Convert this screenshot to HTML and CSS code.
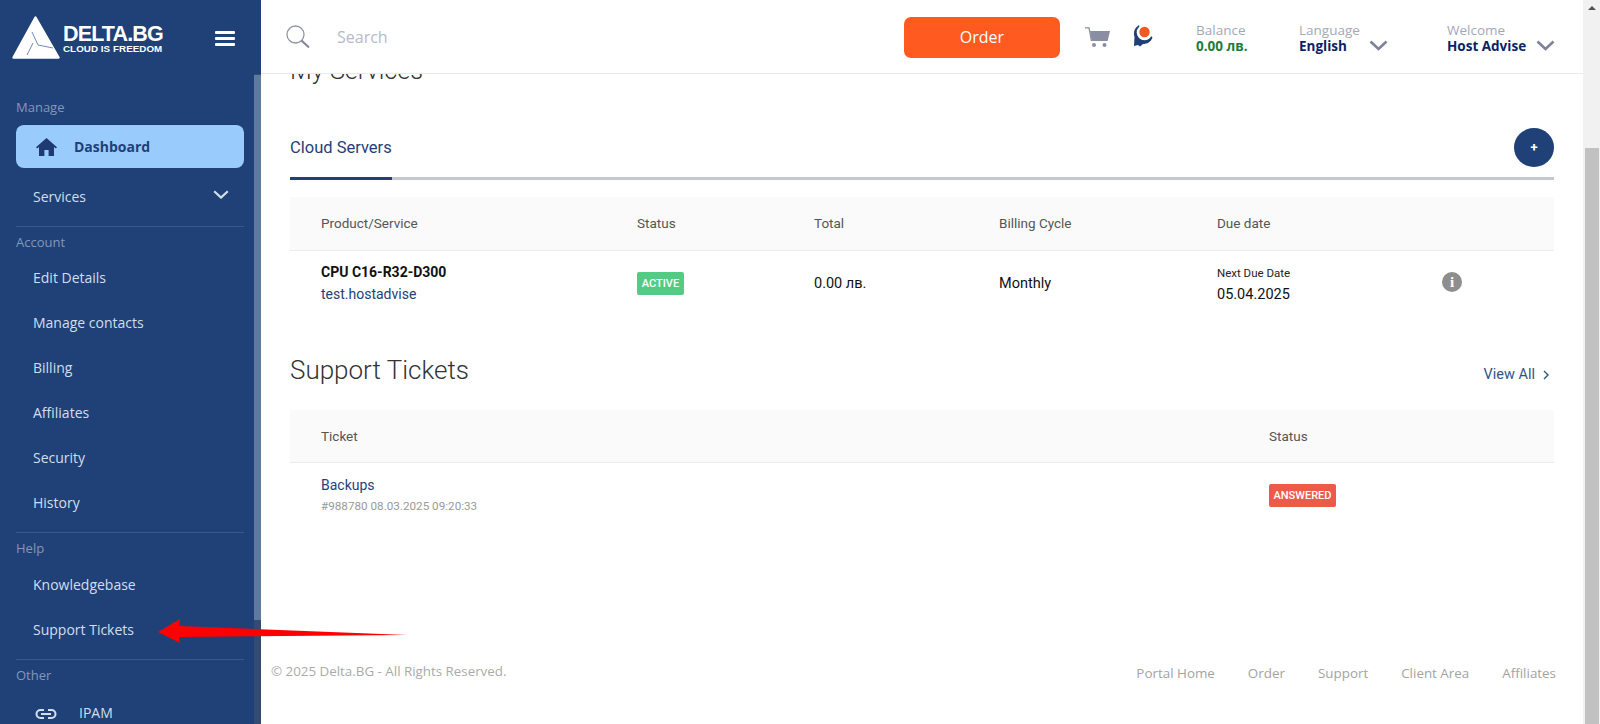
FILE: index.html
```html
<!DOCTYPE html>
<html lang="en">
<head>
<meta charset="utf-8">
<title>Delta.BG - Dashboard</title>
<link rel="stylesheet" href="styles.css">
</head>
<body>
<div class="app">
  <aside class="sidebar">
    <div class="brand">
      <svg class="logo-mark" viewBox="0 0 48 43" aria-hidden="true">
        <path d="M23.5 1.5 46.5 41.5H1.500Z" fill="#fff" stroke="#fff" stroke-width="2.4" stroke-linejoin="round"/>
        <path d="M20 16 26 29M21 27 15 39M26 29 41 32" fill="none" stroke="#6f8bb5" stroke-width="1"/>
      </svg>
      <div class="brand-text">
        <div class="brand-name">DELTA.BG</div>
        <div class="brand-tag">CLOUD IS FREEDOM</div>
      </div>
      <div class="burger"><span></span><span></span><span></span></div>
    </div>
    <div class="side-body">
      <nav class="nav">
        <div class="group first">
          <div class="label">Manage</div>
          <a class="active-item">
            <svg class="home" viewBox="0 0 21 18" aria-hidden="true"><path d="M10.5 0 21 9.2 19.8 10.4 18 8.9V18H12.6V12H8.4V18H3V8.9L1.2 10.4 0 9.2Z" fill="#1f3a70"/></svg>
            <span>Dashboard</span>
          </a>
          <a class="item item-row">Services
            <svg class="side-chev" viewBox="0 0 16 9" aria-hidden="true"><path d="M1.2 1.2 8 7.6 14.8 1.2" fill="none" stroke="#d3deec" stroke-width="2.2"/></svg>
          </a>
        </div>
        <div class="group acct">
          <div class="label">Account</div>
          <a class="item">Edit Details</a>
          <a class="item">Manage contacts</a>
          <a class="item">Billing</a>
          <a class="item">Affiliates</a>
          <a class="item">Security</a>
          <a class="item">History</a>
        </div>
        <div class="group help">
          <div class="label">Help</div>
          <a class="item">Knowledgebase</a>
          <a class="item">Support Tickets</a>
        </div>
        <div class="group last">
          <div class="label">Other</div>
          <a class="item icon-item">
            <svg class="link" viewBox="0 0 22 10" aria-hidden="true"><path d="M9 1H5.5a4 4 0 0 0 0 8H9M13 1h3.5a4 4 0 0 1 0 8H13M6 5h10" fill="none" stroke="#d3deec" stroke-width="2"/></svg>
            <span>IPAM</span>
          </a>
        </div>
      </nav>
      <div class="side-scroll"><div class="side-thumb"></div></div>
    </div>
  </aside>

  <div class="main">
    <header class="topbar">
      <svg class="search-ico" viewBox="0 0 24 23" aria-hidden="true"><circle cx="9.5" cy="9.5" r="8.5" fill="none" stroke="#9096a8" stroke-width="1.3"/><path d="M15.5 15.5 23 22.5" stroke="#7f859a" stroke-width="2"/></svg>
      <div class="search-text">Search</div>
      <button class="order">Order</button>
      <svg class="cart" viewBox="0 0 25 20" aria-hidden="true"><path d="M0 .8H4L6.5 14" fill="none" stroke="#8a8ea3" stroke-width="1.3"/><path d="M5 4H25L22.6 14H6.8Z" fill="#8a8ea3"/><circle cx="9" cy="18" r="2" fill="#8a8ea3"/><circle cx="19.5" cy="18" r="2" fill="#8a8ea3"/></svg>
      <svg class="chat" viewBox="0 0 20 22" aria-hidden="true"><path d="M6 0C1.500 3 0 7 1.500 12L1 21 5 20 7 21.500 10 19C14 19 18 17 19.500 12.500L18 11 9 11Z" fill="#1f3f78"/><circle cx="11.500" cy="7.500" r="7.800" fill="#fff"/><circle cx="11.500" cy="7" r="5.200" fill="#f4591d"/></svg>
      <div class="meta balance"><span class="meta-k">Balance</span><b class="meta-v green">0.00 лв.</b></div>
      <div class="meta lang"><span class="meta-k">Language</span><b class="meta-v">English</b></div>
      <svg class="chev chev-lang" viewBox="0 0 19 11" aria-hidden="true"><path d="M1.500 1.500 9.500 9 17.500 1.500" fill="none" stroke="#7d8298" stroke-width="2.600"/></svg>
      <div class="meta welcome"><span class="meta-k">Welcome</span><b class="meta-v">Host Advise</b></div>
      <svg class="chev" viewBox="0 0 19 11" aria-hidden="true"><path d="M1.500 1.500 9.500 9 17.500 1.500" fill="none" stroke="#7d8298" stroke-width="2.600"/></svg>
    </header>

    <div class="content-wrap">
      <main class="content">
        <h1 class="title scrolled">My Services</h1>
        <div class="tabs">
          <div class="tab">Cloud Servers</div>
          <button class="plus">+</button>
        </div>
        <div class="grid grid-svc head">
          <div>Product/Service</div><div>Status</div><div>Total</div><div>Billing Cycle</div><div>Due date</div>
        </div>
        <div class="grid grid-svc row">
          <div><div class="prod">CPU C16-R32-D300</div><a class="domain">test.hostadvise</a></div>
          <div><span class="badge ok">ACTIVE</span></div>
          <div class="val">0.00 лв.</div>
          <div class="val">Monthly</div>
          <div><div class="due-k">Next Due Date</div><div class="val due-v">05.04.2025</div></div>
          <div class="info">i</div>
        </div>

        <div class="section-head">
          <h2 class="title">Support Tickets</h2>
          <a class="view-all">View All
            <svg class="gt" viewBox="0 0 6 10" aria-hidden="true"><path d="M1 1 5 5 1 9" fill="none" stroke="#2f5587" stroke-width="1.400"/></svg>
          </a>
        </div>
        <div class="grid grid-tk head head-2">
          <div>Ticket</div><div>Status</div>
        </div>
        <div class="grid grid-tk row row-2">
          <div><a class="ticket">Backups</a><div class="ticket-sub">#988780 08.03.2025 09:20:33</div></div>
          <div><span class="badge bad">ANSWERED</span></div>
        </div>
      </main>
      <footer class="footer">
        <div class="copy">© 2025 Delta.BG - All Rights Reserved.</div>
        <div class="foot-links"><a>Portal Home</a><a>Order</a><a>Support</a><a>Client Area</a><a>Affiliates</a></div>
      </footer>
    </div>
  </div>

  <div class="page-scroll"><div class="arrow-up"></div><div class="page-thumb"></div></div>

  <svg class="annot" viewBox="0 0 250 30" aria-hidden="true"><path d="M0 14 22 1 21 8 249 17 21 19 22 25Z" fill="#f00"/></svg>
</div>
</body>
</html>
```
FILE: styles.css
```css
* { box-sizing: border-box; }
html, body { margin: 0; height: 100%; overflow: hidden; background: #fff; }
body { font-family: "Open Sans", sans-serif; color: #222; }
a { text-decoration: none; }
.app { display: flex; height: 724px; position: relative; }

/* sidebar */
.sidebar { width: 261px; flex: none; background: #1f4177; display: flex; flex-direction: column; height: 100%; overflow: hidden; }
.brand { height: 74px; flex: none; display: flex; align-items: flex-start; padding: 16px 26px 0 12px; }
.logo-mark { width: 48px; height: 43px; flex: none; }
.brand-text { margin: 9px 0 0 3px; color: #fff; font-family: "Liberation Sans", sans-serif; font-weight: 700; }
.brand-name { font-size: 21.5px; line-height: 18px; letter-spacing: -.85px; }
.brand-tag { font-size: 9.8px; line-height: 11px; margin-top: 0; letter-spacing: .05px; white-space: nowrap; }
.burger { margin: 15px 0 0 auto; width: 20px; display: flex; flex-direction: column; gap: 3px; }
.burger span { display: block; height: 3px; background: #fff; border-radius: 1px; }
.side-body { flex: 1; display: flex; min-height: 0; }
.nav { flex: 1; padding: 23px 10px 0 16px; min-width: 0; }
.side-scroll { width: 7px; flex: none; background: #344a70; }
.side-thumb { height: 545px; background: #5f7a9f; margin-top: 1px; }
.group { border-bottom: 1px solid #38588b; padding: 5px 0 7px; }
.group.first { padding-top: 0; padding-bottom: 8px; }
.group.last { border: 0; }
.label { height: 20px; line-height: 20px; font-size: 13px; color: #8497b8; margin-bottom: 4px; }
.first .label { margin-bottom: 7px; }
.acct .label { margin-bottom: 3px; }
.last .label { margin-bottom: 5px; }
.item { display: flex; align-items: center; height: 45px; padding-left: 17px; color: #d3deec; font-size: 14px; }
.item-row { justify-content: space-between; padding-right: 15px; margin-top: 6px; height: 44px; }
.side-chev { width: 16px; height: 9px; margin-top: -4px; }
.active-item { display: flex; align-items: center; height: 44px; background: #99ccfd; border-radius: 8px; border-top: 1px solid #1a3a70; padding-left: 20px; color: #1f3f78; font-weight: 700; font-size: 14px; }
.home { width: 21px; height: 18px; margin-right: 17px; }
.icon-item { padding-left: 19px; }
.link { width: 22px; height: 10px; margin: 3px 22px 0 0; }

/* main */
.main { flex: 1; min-width: 0; display: flex; flex-direction: column; }
.topbar { height: 74px; flex: none; border-bottom: 1px solid #e9e9e9; display: flex; align-items: center; padding-left: 25px; background: #fff; position: relative; z-index: 2; }
.search-ico { width: 24px; height: 23px; flex: none; margin-top: -1px; }
.search-text { font-size: 16px; color: #b5bac9; margin-left: 27px; width: 567px; }
.order { width: 156px; height: 41px; border: 0; border-radius: 7px; background: #ff5a1f; color: #fff; font: 400 16px "Open Sans", sans-serif; margin-top: 1px; }
.cart { width: 25px; height: 20px; margin-left: 25px; flex: none; margin-top: 1px; }
.chat { width: 20px; height: 22px; margin-left: 23px; flex: none; margin-top: -1px; }
.meta { display: flex; flex-direction: column; line-height: 16px; margin-top: 3px; }
.meta-k { color: #a4a8b5; font-size: 13.5px; }
.meta-v { color: #0c1f66; font-size: 13.5px; font-weight: 700; white-space: nowrap; }
.green { color: #1c7d3a; }
.balance { margin-left: 43px; width: 103px; }
.lang { width: 70px; }
.chev { width: 19px; height: 11px; margin: 17px 0 0 10px; flex: none; }
.chev-lang { margin-right: 59px; margin-left: 0; }

.content-wrap { flex: 1; min-height: 0; overflow: hidden; display: flex; flex-direction: column; }
.content { padding: 0 29px; }
.title { margin: 0; font: 300 26px/36px Roboto, sans-serif; color: #333; }
.scrolled { margin-top: -21px; font-size: 25.2px; }
.tabs { display: flex; align-items: center; justify-content: space-between; height: 73px; margin-top: 18px; border-bottom: 3px solid #c5c7cc; position: relative; padding-top: 2px; }
.tab { font: 400 16.5px Roboto, sans-serif; color: #1f4177; align-self: stretch; width: 102px; display: flex; align-items: center; border-bottom: 3px solid #1f4177; margin-bottom: -3px; padding-top: 8px; white-space: nowrap; }
.plus { width: 40px; height: 39px; border-radius: 50%; border: 0; background: #1f4177; color: #fff; font: 700 13px Roboto, sans-serif; padding: 0; margin-top: 9px; }
.grid { display: grid; padding-left: 31px; font-family: Roboto, sans-serif; }
.grid-svc { grid-template-columns: 316px 177px 185px 218px 225px 1fr; }
.grid-tk { grid-template-columns: 948px 1fr; }
.head { height: 54px; padding-bottom: 2px; margin-top: 17px; background: #fafafa; border-bottom: 1px solid #ebebeb; align-items: center; font-size: 13.5px; color: #555; }
.row { height: 64px; align-items: center; color: #111; }
.prod { font-size: 14px; font-weight: 700; color: #111; line-height: 22px; }
.domain, .ticket { font-size: 14px; color: #1f4177; line-height: 22px; display: block; }
.badge { display: inline-block; color: #fff; font-size: 11px; font-weight: 500; line-height: 23px; height: 23px; border-radius: 2px; text-align: center; vertical-align: middle; }
.ok { background: #52cc85; width: 47px; }
.bad { background: #ee5a4a; width: 67px; }
.val { font-size: 14.5px; color: #111; margin-top: 0; }
.due-k { font-size: 11.5px; color: #222; line-height: 16px; margin-top: 4px; }
.due-v { line-height: 22px; margin-top: 3px; }
.info { width: 20px; height: 20px; border-radius: 50%; background: #8e8e8e; color: #fff; font: 700 15px/20px "Liberation Serif", serif; text-align: center; margin-top: -2px; }
.section-head { display: flex; justify-content: space-between; align-items: center; margin-top: 37px; height: 36px; }
.view-all { font: 400 14.5px Roboto, sans-serif; color: #2f5587; margin-top: 8px; padding-right: 5px; display: flex; align-items: center; }
.gt { width: 6px; height: 10px; margin-left: 8px; margin-top: 2px; }
.head-2 { margin-top: 22px; height: 53px; padding-bottom: 1px; }
.row-2 { height: 60px; align-items: start; padding-top: 11px; }
.ticket-sub { font-size: 11.7px; color: #9a9a9a; line-height: 20px; margin-top: 0; }
.row-2 .badge { margin-top: 10px; }

.footer { display: flex; justify-content: space-between; padding: 0 27px 0 10px; margin-top: 139px; color: #aaa; }
.copy { font-size: 13.35px; }
.foot-links { display: flex; gap: 33px; margin-top: 2px; }
.foot-links a { color: #a3a3a3; font-size: 13.4px; }

/* page scrollbar */
.page-scroll { width: 17px; flex: none; background: #f1f1f1; display: flex; flex-direction: column; align-items: center; }
.arrow-up { width: 0; height: 0; border: 4px solid transparent; border-top: 0; border-bottom: 4px solid #505050; margin-top: 6px; }
.page-thumb { width: 14px; flex: 1; background: #c1c1c1; margin-top: 138px; }

/* annotation arrow drawn over the page */
.annot { position: absolute; left: 158px; top: 618px; width: 250px; height: 30px; }
```
